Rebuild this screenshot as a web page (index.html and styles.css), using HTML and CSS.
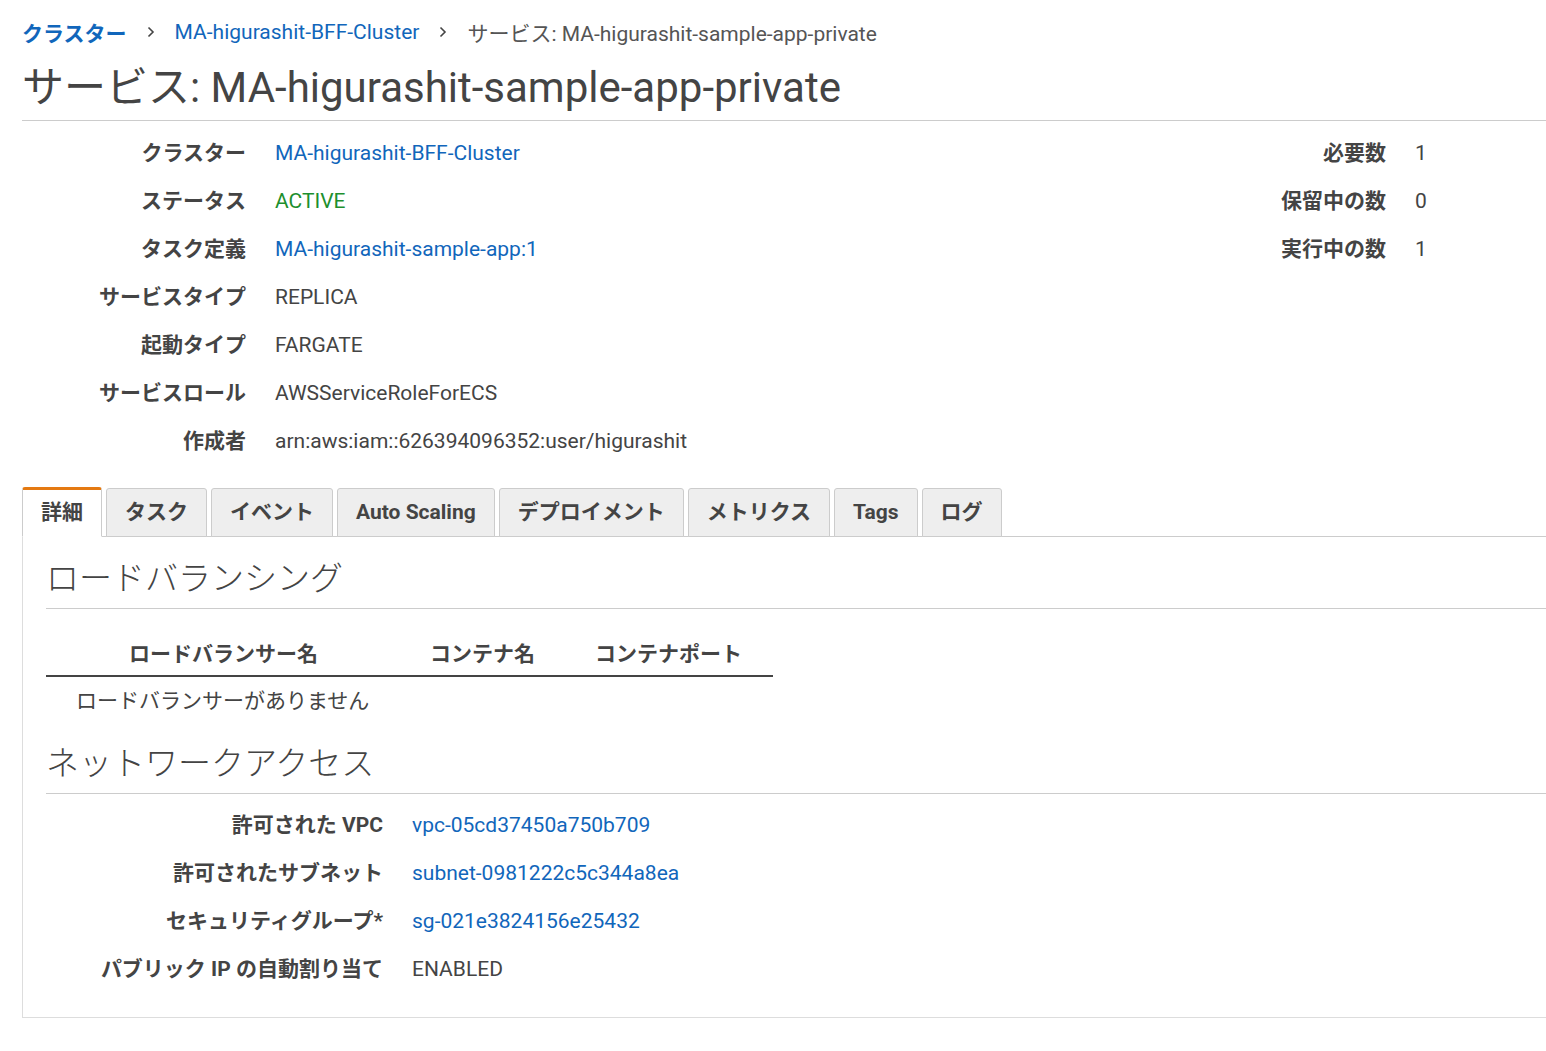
FILE: index.html
```html
<!DOCTYPE html>
<html lang="ja">
<head>
<meta charset="utf-8">
<title>サービス: MA-higurashit-sample-app-private</title>
<link rel="stylesheet" href="styles.css">
</head>
<body>
<div class="page">
  <nav class="breadcrumb">
    <a class="crumb-link crumb-strong" href="#">クラスター</a>
    <svg class="chev" width="8" height="12" viewBox="0 0 8 12"><path d="M1.5 1.5 L6 6 L1.5 10.5" fill="none" stroke="#444" stroke-width="1.6"/></svg>
    <a class="crumb-link" href="#">MA-higurashit-BFF-Cluster</a>
    <svg class="chev" width="8" height="12" viewBox="0 0 8 12"><path d="M1.5 1.5 L6 6 L1.5 10.5" fill="none" stroke="#444" stroke-width="1.6"/></svg>
    <span class="crumb-current">サービス: MA-higurashit-sample-app-private</span>
  </nav>
  <h1 class="title">サービス: MA-higurashit-sample-app-private</h1>

  <section class="details">
    <dl class="kv kv-left">
      <dt>クラスター</dt><dd><a href="#">MA-higurashit-BFF-Cluster</a></dd>
      <dt>ステータス</dt><dd class="ok">ACTIVE</dd>
      <dt>タスク定義</dt><dd><a href="#">MA-higurashit-sample-app:1</a></dd>
      <dt>サービスタイプ</dt><dd>REPLICA</dd>
      <dt>起動タイプ</dt><dd>FARGATE</dd>
      <dt>サービスロール</dt><dd>AWSServiceRoleForECS</dd>
      <dt>作成者</dt><dd>arn:aws:iam::626394096352:user/higurashit</dd>
    </dl>
    <dl class="kv kv-right">
      <dt>必要数</dt><dd>1</dd>
      <dt>保留中の数</dt><dd>0</dd>
      <dt>実行中の数</dt><dd>1</dd>
    </dl>
  </section>

  <div class="tabs">
    <div class="tab active">詳細</div>
    <div class="tab">タスク</div>
    <div class="tab">イベント</div>
    <div class="tab">Auto Scaling</div>
    <div class="tab">デプロイメント</div>
    <div class="tab">メトリクス</div>
    <div class="tab">Tags</div>
    <div class="tab">ログ</div>
  </div>

  <div class="panel">
    <h2 class="section-title">ロードバランシング</h2>
    <table class="lb-table">
      <colgroup><col class="c1"><col class="c2"><col class="c3"></colgroup>
      <thead>
        <tr><th>ロードバランサー名</th><th>コンテナ名</th><th>コンテナポート</th></tr>
      </thead>
      <tbody>
        <tr><td colspan="3">ロードバランサーがありません</td></tr>
      </tbody>
    </table>

    <h2 class="section-title net-title">ネットワークアクセス</h2>
    <dl class="kv kv-net">
      <dt>許可された VPC</dt><dd><a href="#">vpc-05cd37450a750b709</a></dd>
      <dt>許可されたサブネット</dt><dd><a href="#">subnet-0981222c5c344a8ea</a></dd>
      <dt>セキュリティグループ*</dt><dd><a href="#">sg-021e3824156e25432</a></dd>
      <dt>パブリック IP の自動割り当て</dt><dd>ENABLED</dd>
    </dl>
  </div>
</div>
</body>
</html>
```

FILE: styles.css
```css
html, body {
  margin: 0;
  padding: 0;
  background: #ffffff;
}

body {
  font-family: Roboto, "Noto Sans CJK JP", "Liberation Sans", sans-serif;
  font-size: 21px;
  color: #444444;
  overflow: hidden;
}

a {
  color: #1166bb;
  text-decoration: none;
}

.page {
  padding-left: 22px;
}

/* Breadcrumb */
.breadcrumb {
  height: 63px;
  display: flex;
  align-items: center;
  white-space: nowrap;
}

.crumb-link {
  color: #1166bb;
}

.crumb-strong {
  font-weight: 700;
}

.chev {
  margin: 0 20px;
  display: block;
}

.crumb-current {
  color: #555555;
}

/* Title */
.title {
  margin: 0;
  font-size: 42px;
  font-weight: 400;
  line-height: 49px;
  padding-bottom: 8px;
  border-bottom: 1px solid #cccccc;
  white-space: nowrap;
  color: #444444;
}

/* Key-value lists */
.kv {
  display: grid;
  margin: 0;
  column-gap: 29px;
  align-content: start;
}

.kv dt {
  font-weight: 700;
  text-align: right;
  height: 48px;
  line-height: 48px;
  white-space: nowrap;
}

.kv dd {
  margin: 0;
  height: 48px;
  line-height: 48px;
  white-space: nowrap;
}

.details {
  display: flex;
  justify-content: space-between;
  padding-top: 8px;
  padding-bottom: 22px;
}

.kv-left {
  grid-template-columns: 224px auto;
}

.kv-right {
  grid-template-columns: auto 131px;
}

.ok {
  color: #1d8f2e;
}

/* Tabs */
.tabs {
  display: flex;
  align-items: flex-end;
  gap: 4px;
  height: 49px;
  border-bottom: 1px solid #cccccc;
}

.tab {
  box-sizing: border-box;
  height: 49px;
  padding: 0 18px;
  margin-bottom: -1px;
  background: #eeeeee;
  border: 1px solid #cccccc;
  border-radius: 3px 3px 0 0;
  font-weight: 700;
  line-height: 46px;
  white-space: nowrap;
  color: #444444;
}

.tab.active {
  height: 50px;
  background: #ffffff;
  border-top: 3px solid #e47911;
  border-bottom-color: #ffffff;
  line-height: 45px;
  border-radius: 3px 3px 0 0;
}

/* Panel */
.panel {
  border-left: 1px solid #dddddd;
  border-bottom: 1px solid #dddddd;
  padding: 17px 0 24px 23px;
}

.section-title {
  margin: 0;
  font-size: 33px;
  font-weight: 300;
  line-height: 50px;
  padding-bottom: 4px;
  border-bottom: 1px solid #cccccc;
  white-space: nowrap;
  color: #444444;
}

.lb-table {
  margin-top: 19px;
  border-collapse: collapse;
  table-layout: fixed;
  width: 727px;
}

.lb-table .c1 { width: 355px; }
.lb-table .c2 { width: 163px; }
.lb-table .c3 { width: 209px; }

.lb-table th {
  height: 47px;
  padding: 0;
  font-weight: 700;
  text-align: center;
  white-space: nowrap;
  border-bottom: 2px solid #444444;
}

.lb-table td {
  height: 44px;
  padding: 0 0 0 30px;
  white-space: nowrap;
  text-align: left;
}

.net-title {
  margin-top: 18px;
}

.kv-net {
  padding-top: 7px;
  grid-template-columns: 337px auto;
}
```
